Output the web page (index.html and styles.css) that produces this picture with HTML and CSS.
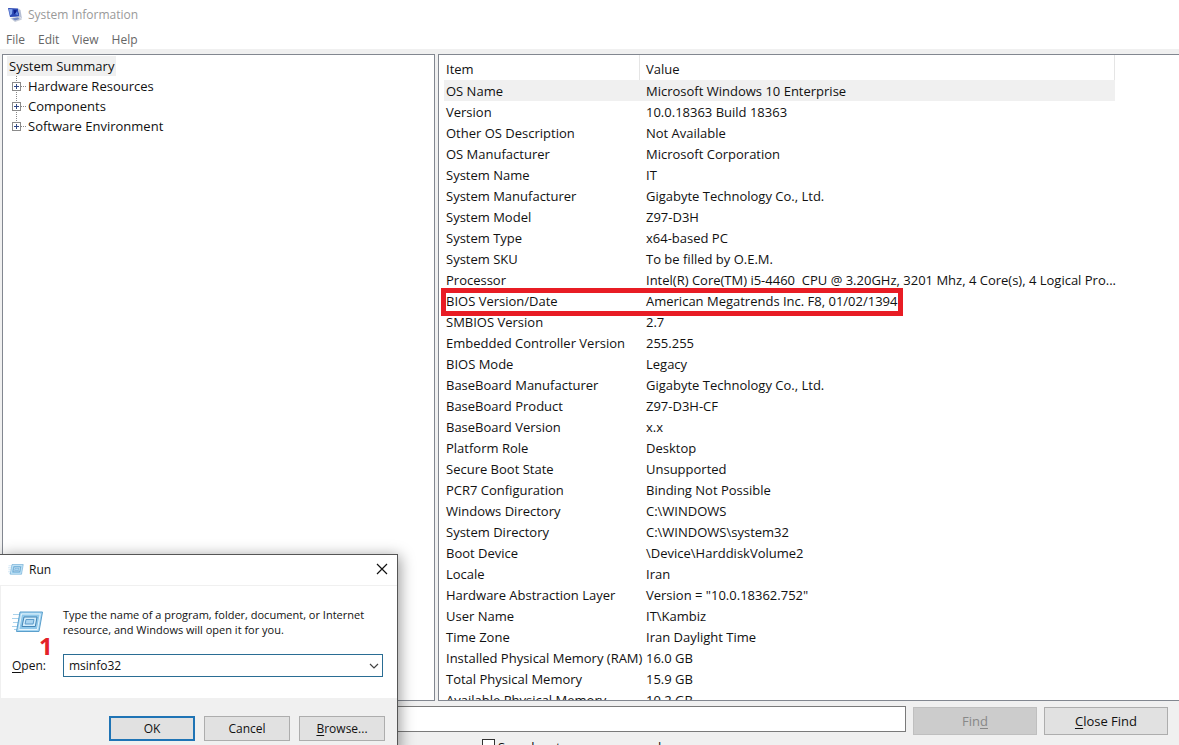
FILE: index.html
```html
<!DOCTYPE html>
<html lang="en">
<head>
<meta charset="utf-8">
<title>System Information</title>
<link rel="stylesheet" href="styles.css">
</head>
<body>
<div class="app">
  <header class="titlebar">
    <svg class="app-icon" viewBox="0 0 16 16" aria-hidden="true">
      <path d="m1 1 10 .5 1.500 8-9.500.5z" fill="#2b48b4"/>
      <path d="m2 2 3.500.2L5 7 3 8.500z" fill="#86a8ee"/>
      <path d="m6.500 3 3 .2.800 3.300-3 .5z" fill="#0b1c86"/>
      <path d="m8 7 2-3 1.500 4.500z" fill="#5f86de"/>
      <path d="m11 1.500 2.500 1.500L15 12l-2.500-2.500z" fill="#b5bed3"/>
      <path d="m3 11 9-1.500 3 3L8 15z" fill="#c9cfda"/>
      <path d="m5 11.500 6-1 1.500 1.500L8 13.500z" fill="#7389c4"/>
    </svg>
    <span>System Information</span>
  </header>
  <nav class="menu">
    <button type="button">File</button>
    <button type="button">Edit</button>
    <button type="button">View</button>
    <button type="button">Help</button>
  </nav>
  <main class="panes">
    <section class="pane tree">
      <span class="tree-root">System Summary</span>
      <ul class="tree-list">
        <li><button type="button" class="expander" aria-label="Expand Hardware Resources"></button><span>Hardware Resources</span></li>
        <li><button type="button" class="expander" aria-label="Expand Components"></button><span>Components</span></li>
        <li><button type="button" class="expander" aria-label="Expand Software Environment"></button><span>Software Environment</span></li>
      </ul>
    </section>
    <section class="pane details">
      <table class="info">
        <colgroup><col class="col-item"><col></colgroup>
        <thead><tr><th>Item</th><th>Value</th></tr></thead>
        <tbody>
          <tr class="selected"><td>OS Name</td><td>Microsoft Windows 10 Enterprise</td></tr>
          <tr><td>Version</td><td>10.0.18363 Build 18363</td></tr>
          <tr><td>Other OS Description</td><td>Not Available</td></tr>
          <tr><td>OS Manufacturer</td><td>Microsoft Corporation</td></tr>
          <tr><td>System Name</td><td>IT</td></tr>
          <tr><td>System Manufacturer</td><td>Gigabyte Technology Co., Ltd.</td></tr>
          <tr><td>System Model</td><td>Z97-D3H</td></tr>
          <tr><td>System Type</td><td>x64-based PC</td></tr>
          <tr><td>System SKU</td><td>To be filled by O.E.M.</td></tr>
          <tr><td>Processor</td><td>Intel(R) Core(TM) i5-4460&nbsp; CPU @ 3.20GHz, 3201 Mhz, 4 Core(s), 4 Logical Pro...</td></tr>
          <tr><td class="marked">BIOS Version/Date</td><td>American Megatrends Inc. F8, 01/02/1394</td></tr>
          <tr><td>SMBIOS Version</td><td>2.7</td></tr>
          <tr><td>Embedded Controller Version</td><td>255.255</td></tr>
          <tr><td>BIOS Mode</td><td>Legacy</td></tr>
          <tr><td>BaseBoard Manufacturer</td><td>Gigabyte Technology Co., Ltd.</td></tr>
          <tr><td>BaseBoard Product</td><td>Z97-D3H-CF</td></tr>
          <tr><td>BaseBoard Version</td><td>x.x</td></tr>
          <tr><td>Platform Role</td><td>Desktop</td></tr>
          <tr><td>Secure Boot State</td><td>Unsupported</td></tr>
          <tr><td>PCR7 Configuration</td><td>Binding Not Possible</td></tr>
          <tr><td>Windows Directory</td><td>C:\WINDOWS</td></tr>
          <tr><td>System Directory</td><td>C:\WINDOWS\system32</td></tr>
          <tr><td>Boot Device</td><td>\Device\HarddiskVolume2</td></tr>
          <tr><td>Locale</td><td>Iran</td></tr>
          <tr><td>Hardware Abstraction Layer</td><td>Version = "10.0.18362.752"</td></tr>
          <tr><td>User Name</td><td>IT\Kambiz</td></tr>
          <tr><td>Time Zone</td><td>Iran Daylight Time</td></tr>
          <tr><td>Installed Physical Memory (RAM)</td><td>16.0 GB</td></tr>
          <tr><td>Total Physical Memory</td><td>15.9 GB</td></tr>
          <tr><td>Available Physical Memory</td><td>10.2 GB</td></tr>
        </tbody>
      </table>
    </section>
  </main>
  <footer class="find">
    <div class="find-row">
      <input type="text" class="find-input" aria-label="Find what">
      <button type="button" class="btn btn-find" disabled>Fin<u>d</u></button>
      <button type="button" class="btn btn-find"><u>C</u>lose Find</button>
    </div>
    <div class="find-options">
      <input type="checkbox" id="names-only">
      <label for="names-only">Search category names only</label>
    </div>
  </footer>
</div>

<div class="dialog" role="dialog" aria-labelledby="run-title">
  <div class="dialog-title">
    <svg class="run-small" viewBox="0 0 32 22" aria-hidden="true"><use href="#run-art"/></svg>
    <span id="run-title">Run</span>
    <button type="button" class="close" aria-label="Close">
      <svg viewBox="0 0 12 12"><path d="m1 1 10 10M11 1 1 11" fill="none" stroke="#111" stroke-width="1.200"/></svg>
    </button>
  </div>
  <div class="dialog-body">
    <svg class="run-large" viewBox="0 0 32 22" aria-hidden="true">
      <g id="run-art">
        <path d="M1 3.500h8M0 7.500h7M1 11.500h6M0 15.500h5M2 18.500h4" stroke="#a9d2ec" stroke-width="1" fill="none"/>
        <path d="M8 1h22.500L27 20.500H4.500z" fill="#a5d5f2" stroke="#5a9fcc"/>
        <path d="M9.500 3h18.700l-2.800 15.500H6.800z" fill="#8fc8ea" stroke="#e6f5fd"/>
        <path d="M12 6h13l-1.700 9.500H10z" fill="#d3edfb" stroke="#4585b5"/>
        <path d="M14 8.500h8l-.9 4.500h-8z" fill="#a9d4f0" stroke="#5d9ccb"/>
      </g>
    </svg>
    <p class="dialog-text">Type the name of a program, folder, document, or Internet resource, and Windows will open it for you.</p>
    <label class="open-label" for="open"><u>O</u>pen:<span class="step">1</span></label>
    <div class="combo">
      <input type="text" id="open" value="msinfo32">
      <button type="button" aria-label="Show history">
        <svg viewBox="0 0 10 6"><path d="m1 1 4 4 4-4" fill="none" stroke="#444" stroke-width="1.200"/></svg>
      </button>
    </div>
  </div>
  <div class="dialog-actions">
    <button type="button" class="btn btn-default">OK</button>
    <button type="button" class="btn">Cancel</button>
    <button type="button" class="btn"><u>B</u>rowse...</button>
  </div>
</div>
</body>
</html>
```
FILE: styles.css
```css
*, *::before, *::after { box-sizing: border-box; }

body {
  margin: 0;
  overflow: hidden;
  background: #f0f0f0;
  color: #111;
  font: 13px/20px "Open Sans", "Noto Sans", sans-serif;
}

button, input { font: inherit; color: inherit; }
u { text-underline-offset: 2px; }

.app {
  display: flex;
  flex-direction: column;
  height: 100vh;
}

.titlebar {
  display: flex;
  align-items: center;
  gap: 5px;
  height: 30px;
  padding: 0 7px;
  background: #fff;
  color: #999;
  font-size: 12px;
}
.app-icon { width: 16px; height: 16px; }

.menu {
  display: flex;
  gap: 13px;
  height: 19px;
  padding: 0 6px;
  background: #fff;
}
.menu button {
  padding: 0;
  border: 0;
  background: none;
  color: #666;
  font-size: 12px;
  line-height: 20px;
}

.panes {
  flex: 1;
  min-height: 0;
  display: grid;
  grid-template-columns: 433px minmax(0, 1fr);
  gap: 3px;
  padding: 5px 0 0 2px;
}
.pane {
  min-height: 0;
  overflow: hidden;
  background: #fff;
  border: 1px solid #828790;
}

.tree { padding: 1px 4px; }
.tree-root {
  display: inline-block;
  padding: 0 2px;
  background: #f0f0f0;
}
.tree-list {
  margin: 0;
  padding: 0 0 0 4px;
  list-style: none;
}
.tree-list li {
  display: flex;
  align-items: center;
  height: 20px;
  background:
    repeating-linear-gradient(to bottom, #888 0 1px, transparent 1px 2px) 5px 0 / 1px 100% no-repeat,
    repeating-linear-gradient(to right, #888 0 1px, transparent 1px 2px) 10px 10px / 5px 1px no-repeat;
}
.tree-list li:last-child { background-size: 1px 50%, 5px 1px; }
.expander {
  width: 9px;
  height: 9px;
  margin: 0 7px 0 1px;
  padding: 0;
  border: 1px solid #8b8b8b;
  background:
    linear-gradient(#334a86, #334a86) center / 5px 1px no-repeat,
    linear-gradient(#334a86, #334a86) center / 1px 5px no-repeat,
    #fff;
}

.details {
  padding: 0 0 0 5px;
  border-right: 0;
}
.info {
  width: 671px;
  table-layout: fixed;
  border-collapse: separate;
  border-spacing: 0;
}
.col-item { width: 196px; }
.info th {
  height: 25px;
  padding: 2px 2px 0;
  border-right: 1px solid #e5e5e5;
  font-weight: 400;
  text-align: left;
}
.info td {
  height: 21px;
  padding: 0 2px;
  white-space: nowrap;
}
.info th + th, .info td + td { padding-left: 6px; }
.selected { background: #f0f0f0; }
.marked { position: relative; }
.marked::after {
  content: "";
  position: absolute;
  top: -2px;
  left: -3px;
  z-index: 1;
  width: 462px;
  height: 28px;
  border: 5px solid #e81c24;
}

.find {
  flex: none;
  height: 44px;
  overflow: hidden;
  padding: 5px 11px 0 0;
}
.find-row {
  display: flex;
  align-items: flex-start;
  gap: 7px;
}
.find-input {
  flex: 1;
  min-width: 0;
  height: 26px;
  border: 1px solid #7a7a7a;
  background: #fff;
}
.find-options {
  display: flex;
  gap: 3px;
  padding: 4px 0 0 482px;
}
.find-options input {
  appearance: none;
  width: 13px;
  height: 13px;
  margin: 0;
  border: 1px solid #333;
  background: #fff;
}
.find-options label { line-height: 16px; }

.btn {
  padding: 0;
  border: 1px solid #adadad;
  background: #e1e1e1;
}
.btn:disabled {
  border-color: #bfbfbf;
  background: #ccc;
  color: #888;
}
.btn-find {
  width: 124px;
  height: 28px;
  margin-top: 1px;
}

.dialog {
  position: absolute;
  top: 554px;
  left: 0;
  width: 398px;
  background: #fff;
  border: 1px solid #555;
  border-left: 0;
  box-shadow: 2px 2px 14px rgba(0, 0, 0, 0.4);
  font-size: 12px;
  line-height: 15px;
}
.dialog-title {
  display: flex;
  align-items: center;
  gap: 5px;
  height: 31px;
  padding: 0 9px 2px 8px;
  border-bottom: 1px solid #f0f0f0;
}
.run-small { width: 16px; height: 11px; }
.close {
  display: grid;
  margin-left: auto;
  padding: 0;
  border: 0;
  background: none;
}
.close svg { width: 12px; height: 12px; }
.dialog-body {
  display: grid;
  grid-template-columns: 51px 1fr;
  row-gap: 17px;
  padding: 21px 14px 21px 11px;
  border-left: 1px solid #f0f0f0;
}
.run-large { width: 32px; height: 22px; margin-top: 4px; }
.dialog-text { margin: 0; font-size: 11px; }
.open-label {
  position: relative;
  align-self: center;
}
.step {
  position: absolute;
  top: -24px;
  left: 27px;
  color: #e32228;
  font-size: 24px;
  font-weight: 700;
  line-height: 24px;
}
.combo {
  display: flex;
  height: 23px;
  border: 1px solid #2a6d94;
}
.combo input {
  flex: 1;
  min-width: 0;
  padding: 0 5px;
  border: 0;
  background: none;
}
.combo button {
  display: grid;
  place-items: center;
  width: 17px;
  padding: 0;
  border: 0;
  background: none;
}
.combo svg { width: 10px; height: 6px; }
.dialog-actions {
  display: flex;
  justify-content: flex-end;
  gap: 9px;
  padding: 18px 12px 12px;
  background: #f0f0f0;
}
.dialog-actions .btn { width: 86px; height: 25px; }
.btn-default { border: 2px solid #1f74b5; }
```
